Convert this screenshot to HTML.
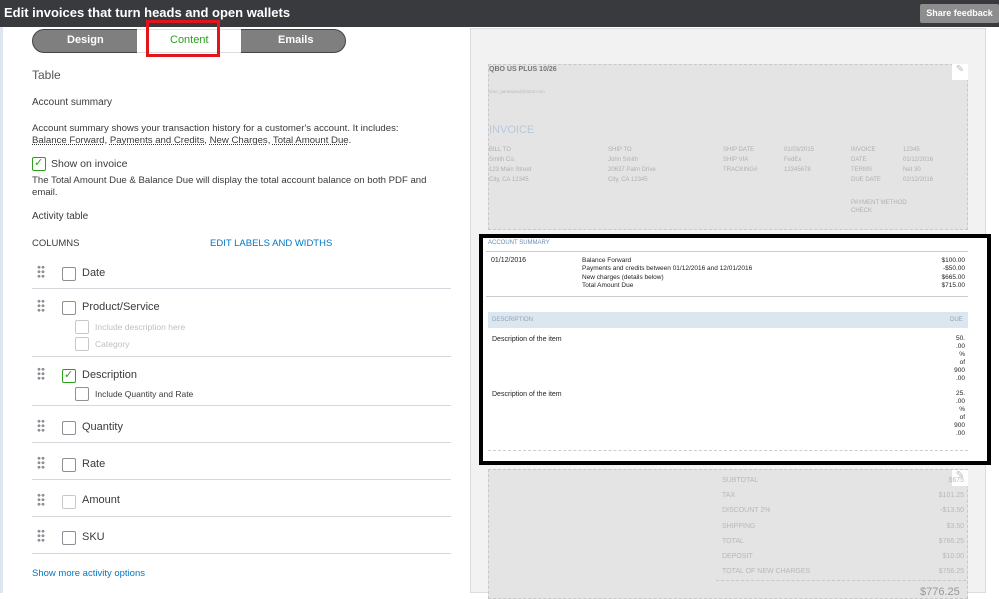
<!DOCTYPE html>
<html><head><style>
*{margin:0;padding:0;box-sizing:border-box}
body{width:999px;height:593px;overflow:hidden;background:#fff;font-family:"Liberation Sans",sans-serif;position:relative;color:#393a3d}
.a{position:absolute;white-space:nowrap}
.hdr{left:0;top:0;width:999px;height:27px;background:#393a3d}
.t{font-size:13px}
.sm{font-size:10px;color:#393a3d}
.cb{position:absolute;width:14px;height:14px;border:1px solid #8d9096;border-radius:2px;background:#fff}
.cbl{border-color:#c8c8c8}
.cbg{border-color:#2ca01c}
.dots{position:absolute;width:8px;height:14px;background-image:radial-gradient(circle,#8d9096 1.3px,transparent 1.6px);background-size:4px 4.5px}
.line{position:absolute;left:32px;width:419px;height:1px;background:#d4d7dc}
.p{font-size:6px;color:#b0b0b0}
.g{font-size:7px;color:#222}
.s{font-size:7px;color:#b8b8b8}
</style></head><body>
<div class="a hdr"></div>
<div class="a" style="left:4px;top:5px;color:#fff;font-weight:bold;font-size:13px">Edit invoices that turn heads and open wallets</div>
<div class="a" style="left:920px;top:4px;width:79px;height:19px;background:#8d8d8d;border-radius:2px;color:#fff;font-weight:bold;font-size:9px;text-align:center;line-height:19px">Share feedback</div>
<div class="a" style="left:0;top:27px;width:3px;height:566px;background:#dde6f0"></div>
<div class="a" style="left:32px;top:29px;width:314px;height:24px;border:1px solid #444;border-radius:12px;background:#7f7f7f"></div>
<div class="a" style="left:137px;top:29px;width:104px;height:24px;background:#fff;border-top:1px solid #ddd;border-bottom:1px solid #ddd"></div>
<div class="a" style="left:67px;top:34px;color:#fff;font-weight:bold;font-size:11px">Design</div>
<div class="a" style="left:278px;top:34px;color:#fff;font-weight:bold;font-size:11px">Emails</div>
<div class="a" style="left:170px;top:34px;color:#2ca01c;font-size:11px">Content</div>
<div class="a" style="left:146px;top:20px;width:74px;height:37px;border:3px solid #e3141b"></div>
<div class="a" style="left:32px;top:68px;font-size:12px;color:#555">Table</div>
<div class="a sm" style="left:32px;top:97px">Account summary</div>
<div class="a sm" style="left:32px;top:123px;line-height:12px;font-size:9.6px">Account summary shows your transaction history for a customer's account. It includes:<br><u style="text-decoration-style:dotted">Balance Forward</u>, <u style="text-decoration-style:dotted">Payments and Credits</u>, <u style="text-decoration-style:dotted">New Charges</u>, <u style="text-decoration-style:dotted">Total Amount Due</u>.</div>
<div class="cb cbg" style="left:32px;top:157px"></div><div class="a" style="left:34px;top:156px;color:#2ca01c;font-size:11px">✓</div>
<div class="a sm" style="left:51px;top:158px;font-size:10.5px">Show on invoice</div>
<div class="a sm" style="left:32px;top:175px;line-height:11.5px;font-size:9.6px">The Total Amount Due &amp; Balance Due will display the total account balance on both PDF and<br>email.</div>
<div class="a sm" style="left:32px;top:211px">Activity table</div>
<div class="a sm" style="left:32px;top:238px;font-size:9.5px">COLUMNS</div>
<div class="a" style="left:210px;top:238px;font-size:9.5px;color:#0077c5">EDIT LABELS AND WIDTHS</div>
<div class="dots" style="left:37px;top:265px"></div><div class="cb" style="left:62px;top:267px"></div><div class="a t" style="left:82px;top:267px;font-size:11px">Date</div>
<div class="line" style="top:288px"></div>
<div class="dots" style="left:37px;top:299px"></div><div class="cb" style="left:62px;top:301px"></div><div class="a t" style="left:82px;top:301px;font-size:11px">Product/Service</div>
<div class="cb cbl" style="left:75px;top:320px"></div><div class="a" style="left:95px;top:322px;font-size:8.5px;color:#c0c0c0">Include description here</div>
<div class="cb cbl" style="left:75px;top:337px"></div><div class="a" style="left:95px;top:339px;font-size:8.5px;color:#c0c0c0">Category</div>
<div class="line" style="top:356px"></div>
<div class="dots" style="left:37px;top:367px"></div><div class="cb cbg" style="left:62px;top:369px"></div><div class="a" style="left:64px;top:368px;color:#2ca01c;font-size:11px">✓</div><div class="a t" style="left:82px;top:369px;font-size:11px">Description</div>
<div class="cb" style="left:75px;top:387px"></div><div class="a" style="left:95px;top:389px;font-size:8.5px;color:#393a3d">Include Quantity and Rate</div>
<div class="line" style="top:405px"></div>
<div class="dots" style="left:37px;top:419px"></div><div class="cb" style="left:62px;top:421px"></div><div class="a t" style="left:82px;top:421px;font-size:11px">Quantity</div>
<div class="line" style="top:442px"></div>
<div class="dots" style="left:37px;top:456px"></div><div class="cb" style="left:62px;top:458px"></div><div class="a t" style="left:82px;top:458px;font-size:11px">Rate</div>
<div class="line" style="top:479px"></div>
<div class="dots" style="left:37px;top:493px"></div><div class="cb cbl" style="left:62px;top:495px"></div><div class="a t" style="left:82px;top:494px;font-size:11px">Amount</div>
<div class="line" style="top:516px"></div>
<div class="dots" style="left:37px;top:529px"></div><div class="cb" style="left:62px;top:531px"></div><div class="a t" style="left:82px;top:531px;font-size:11px">SKU</div>
<div class="line" style="top:553px"></div>
<div class="a" style="left:32px;top:568px;font-size:9.5px;color:#0077c5">Show more activity options</div>
<div class="a" style="left:470px;top:28px;width:516px;height:565px;background:#f2f2f2;border:1px solid #ddd"></div>
<div class="a" style="left:488px;top:64px;width:480px;height:166px;background:#e4e4e4;border:1px dashed #c8c8c8"></div>
<div class="a" style="left:952px;top:64px;width:16px;height:16px;background:#fff;color:#bbb;font-size:10px;text-align:center">✎</div>
<div class="a" style="left:489px;top:66px;font-size:7px;font-weight:bold;color:#777">QBO US PLUS 10/26</div>
<div class="a" style="left:489px;top:89px;font-size:4.5px;color:#bbb">eran_jamespaul@intuit.com</div>
<div class="a" style="left:489px;top:124px;font-size:11px;color:#b8c8d8">INVOICE</div>
<div class="a p" style="left:489px;top:145px;line-height:10px">BILL TO<br>Smith Co.<br>123 Main Street<br>City, CA 12345</div>
<div class="a p" style="left:608px;top:145px;line-height:10px">SHIP TO<br>John Smith<br>20637 Palm Drive<br>City, CA 12345</div>
<div class="a p" style="left:723px;top:145px;line-height:10px">SHIP DATE<br>SHIP VIA<br>TRACKING#</div>
<div class="a p" style="left:784px;top:145px;line-height:10px">01/03/2015<br>FedEx<br>12345678</div>
<div class="a p" style="left:851px;top:145px;line-height:10px">INVOICE<br>DATE<br>TERMS<br>DUE DATE</div>
<div class="a p" style="left:903px;top:145px;line-height:10px">12345<br>01/12/2016<br>Net 30<br>02/12/2016</div>
<div class="a p" style="left:851px;top:199px;line-height:8px">PAYMENT METHOD<br>CHECK</div>
<div class="a" style="left:479px;top:234px;width:512px;height:231px;border:4px solid #000;background:#fff"></div>
<div class="a" style="left:488px;top:240px;font-size:6px;color:#6a8cb0">ACCOUNT SUMMARY</div>
<div class="a" style="left:486px;top:251px;width:482px;height:1px;background:#ccc"></div>
<div class="a g" style="left:491px;top:257px">01/12/2016</div>
<div class="a" style="left:582px;top:257px;font-size:6.5px;color:#222;line-height:8.3px">Balance Forward<br>Payments and credits between 01/12/2016 and 12/01/2016<br>New charges (details below)<br>Total Amount Due</div>
<div class="a" style="left:930px;top:257px;font-size:6.5px;color:#222;line-height:8.3px;text-align:right;width:35px">$100.00<br>-$50.00<br>$665.00<br>$715.00</div>
<div class="a" style="left:486px;top:296px;width:482px;height:1px;background:#ccc"></div>
<div class="a" style="left:488px;top:312px;width:480px;height:16px;background:#dce6ee"></div>
<div class="a" style="left:492px;top:317px;font-size:6px;color:#8aa4bf">DESCRIPTION</div>
<div class="a" style="left:950px;top:317px;font-size:6px;color:#8aa4bf">DUE</div>
<div class="a g" style="left:492px;top:336px">Description of the item</div>
<div class="a g" style="left:492px;top:391px">Description of the item</div>
<div class="a" style="left:940px;top:335px;width:25px;font-size:6.5px;color:#222;line-height:8px;text-align:right">50.<br>.00<br>%<br>of<br>900<br>.00</div>
<div class="a" style="left:940px;top:390px;width:25px;font-size:6.5px;color:#222;line-height:8px;text-align:right">25.<br>.00<br>%<br>of<br>900<br>.00</div>
<div class="a" style="left:488px;top:450px;width:480px;border-top:1px dashed #ccc"></div>
<div class="a" style="left:488px;top:469px;width:480px;height:130px;background:#e4e4e4;border:1px dashed #c8c8c8"></div>
<div class="a" style="left:952px;top:470px;width:16px;height:16px;background:#fff;color:#bbb;font-size:10px;text-align:center">✎</div>
<div class="a s" style="left:722px;top:473px;line-height:15.2px">SUBTOTAL<br>TAX<br>DISCOUNT 2%<br>SHIPPING<br>TOTAL<br>DEPOSIT<br>TOTAL OF NEW CHARGES</div>
<div class="a s" style="left:910px;top:473px;width:54px;text-align:right;line-height:15.2px">$675<br>$101.25<br>-$13.50<br>$3.50<br>$766.25<br>$10.00<br>$756.25</div>
<div class="a" style="left:716px;top:580px;width:250px;border-top:1px dashed #c8c8c8"></div>
<div class="a" style="left:920px;top:586px;font-size:11px;color:#999">$776.25</div>
</body></html>
